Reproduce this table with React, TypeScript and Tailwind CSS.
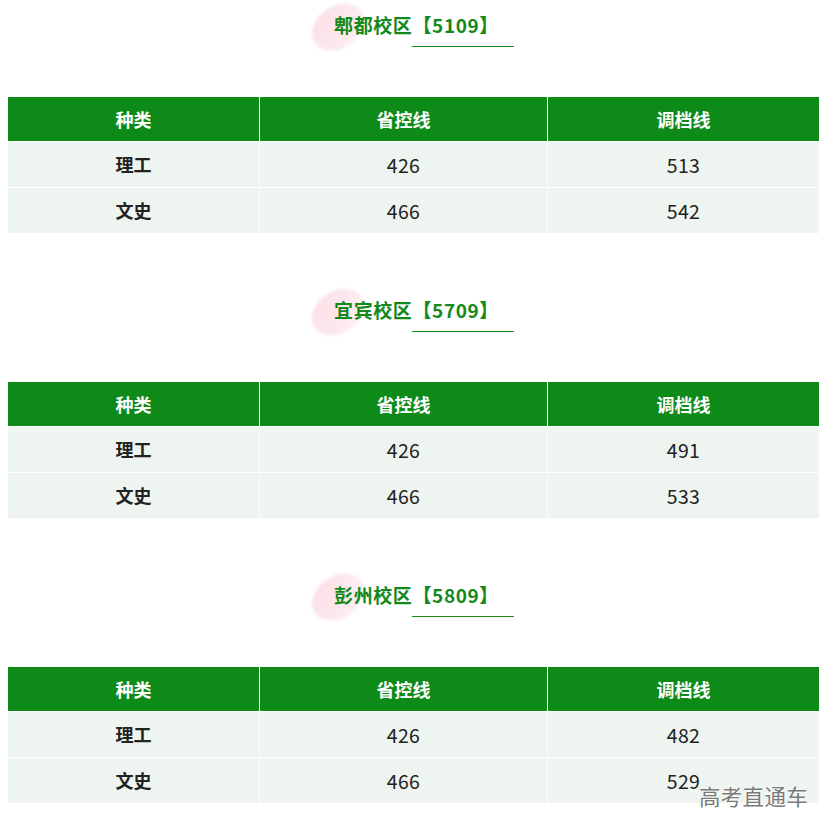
const campuses = [
  { name: '郫都校区', code: '5109', rows: [['理工', '426', '513'], ['文史', '466', '542']] },
  { name: '宜宾校区', code: '5709', rows: [['理工', '426', '491'], ['文史', '466', '533']] },
  { name: '彭州校区', code: '5809', rows: [['理工', '426', '482'], ['文史', '466', '529']] },
]

const font = { fontFamily: '"Noto Sans CJK SC", "Noto Sans", sans-serif' }

function Title({ name, code }: { name: string; code: string }) {
  return (
    <div className="relative flex h-[50px] items-center justify-center">
      <div className="absolute left-[302px] top-[6px] h-[42px] w-[56px] -rotate-[35deg] rounded-[50%] bg-gradient-to-br from-[#fbdde5] to-[#fdf1f4] blur-[1.5px]" />
      <div className="absolute left-[404px] top-[46px] h-px w-[102px] bg-[#1a8f1a]" />
      <h3 className="relative pl-[6px] text-[19px] font-bold tracking-[0.6px] text-[#14891b]">
        {name}【{code}】
      </h3>
    </div>
  )
}

function ScoreTable({ rows }: { rows: string[][] }) {
  return (
    <div className="grid grid-cols-[251px_287px_1fr] gap-px bg-white">
      {['种类', '省控线', '调档线'].map((h) => (
        <div key={h} className="flex h-[44px] items-center justify-center bg-[#0e8a19] text-[18px] font-bold text-white">
          {h}
        </div>
      ))}
      {rows.map((r) =>
        r.map((cell, i) => (
          <div
            key={r[0] + i}
            className={`flex h-[45px] items-center justify-center bg-[#eef4ef] text-[#222] ${i === 0 ? 'text-[18px] font-bold' : 'text-[19.5px] tracking-[0.3px]'}`}
          >
            {cell}
          </div>
        )),
      )}
    </div>
  )
}

export default function App() {
  return (
    <div className="relative h-[835px] w-full bg-white px-[8px] pr-[18px]" style={font}>
      {campuses.map((c, idx) => (
        <section key={c.code} className={idx === 0 ? '' : 'mt-[52px]'}>
          <Title name={c.name} code={c.code} />
          <div className="mt-[47px]">
            <ScoreTable rows={c.rows} />
          </div>
        </section>
      ))}
      <div className="absolute left-[699px] top-[780px] text-[21.5px] tracking-[0.3px] text-[#7a7a7a] [text-shadow:0_0_2px_#fff,0_0_2px_#fff]">
        高考直通车
      </div>
    </div>
  )
}
